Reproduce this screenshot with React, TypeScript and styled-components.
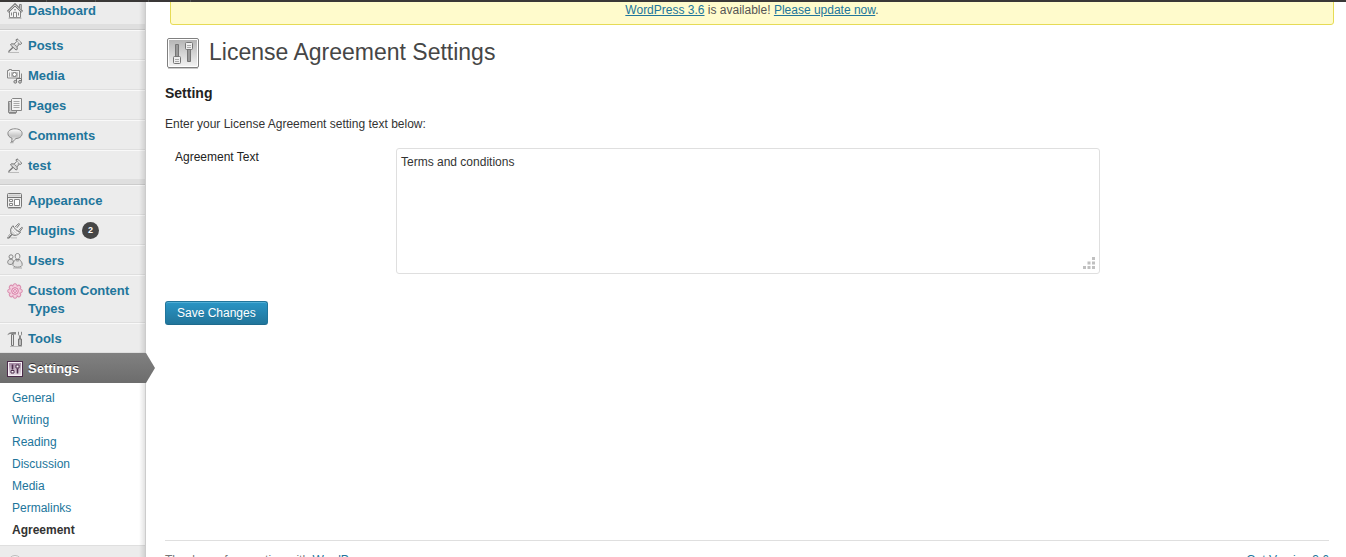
import React from "react";
import styled, { createGlobalStyle, css } from "styled-components";

const GlobalStyle = createGlobalStyle`
  *, *::before, *::after { box-sizing: border-box; }
  body {
    margin: 0;
    overflow: hidden;
    background: #fff;
    color: #333;
    font: 12px/18px "Liberation Sans", Arial, sans-serif;
  }
  h2, h3, p, ul { margin: 0; padding: 0; }
  ul { list-style: none; }
`;

const link = "#21759b";

const AdminBar = styled.header`
  position: relative;
  z-index: 2;
  display: flex;
  height: 2px;
  background: #3a3837;
`;

const AdminBarItem = styled.span<{ $width: number }>`
  width: ${(p) => p.$width}px;
  border-right: 1px solid #555;
`;

const Page = styled.div`
  display: flex;
  align-items: stretch;
  min-height: calc(100vh + 27px);
  margin-top: -7px;
`;

const Sidebar = styled.nav`
  position: relative;
  flex: 0 0 146px;
  background: #ececec;
  border-right: 1px solid #ccc;

  &::after {
    content: "";
    position: absolute;
    inset: 0 0 0 auto;
    width: 6px;
    background: linear-gradient(to right, rgba(0, 0, 0, 0), rgba(0, 0, 0, 0.11));
    pointer-events: none;
  }
`;

const MenuLink = styled.a<{ $current?: boolean }>`
  display: flex;
  align-items: flex-start;
  gap: 5px;
  padding: 6px 8px 4px 7px;
  border-top: 1px solid #f9f9f9;
  border-bottom: 1px solid #dfdfdf;
  color: ${link};
  font-size: 13px;
  font-weight: bold;
  line-height: 18px;
  text-decoration: none;

  svg {
    flex: none;
    display: block;
    margin-top: 1px;
  }

  ${(p) =>
    p.$current &&
    css`
      position: relative;
      z-index: 1;
      margin-right: -1px;
      border-color: #808080 transparent #6d6d6d;
      background: linear-gradient(#808080, #6d6d6d);
      color: #fff;
      text-shadow: 0 -1px 0 #333;

      &::after {
        content: "";
        position: absolute;
        top: -1px;
        bottom: -1px;
        left: 100%;
        width: 9px;
        background: linear-gradient(#808080, #6d6d6d);
        clip-path: polygon(0 0, 100% 50%, 0 100%);
      }
    `}
`;

const CountBadge = styled.span`
  width: 17px;
  height: 17px;
  margin-left: 2px;
  border-radius: 50%;
  background: #464646;
  color: #fff;
  font-size: 9px;
  line-height: 17px;
  text-align: center;
`;

const Separator = styled.li`
  height: 5px;
  border-bottom: 1px solid #ccc;
  background: #dfdfdf;
`;

const Submenu = styled.ul`
  padding: 4px 0;
  background: #fff;
`;

const SubmenuLink = styled.a<{ $current?: boolean }>`
  display: block;
  padding: 2px 12px;
  color: ${(p) => (p.$current ? "#333" : link)};
  font-weight: ${(p) => (p.$current ? "bold" : "normal")};
  text-decoration: none;
`;

const CollapseButton = styled.button`
  display: flex;
  align-items: center;
  gap: 5px;
  width: 100%;
  padding: 8px 7px;
  border: 0;
  border-top: 1px solid #dfdfdf;
  background: none;
  color: #777;
  font: inherit;
`;

const Main = styled.main`
  display: flex;
  flex: 1;
  flex-direction: column;
  min-width: 0;
  padding: 0 17px 0 19px;
`;

const Notice = styled.p`
  margin: 0 -5px 0 5px;
  padding: 5px 0;
  border: 1px solid #e6db55;
  border-radius: 3px;
  background: #fffbcc;
  color: #555;
  text-align: center;

  a { color: ${link}; }
`;

const PageHeading = styled.div`
  display: flex;
  align-items: center;
  gap: 10px;
  height: 30px;
  margin-top: 13px;
  padding-left: 2px;

  svg { display: block; }
`;

const PageTitle = styled.h2`
  color: #464646;
  font-size: 23px;
  font-weight: normal;
  line-height: 28px;
  padding-bottom: 2px;
`;

const SectionTitle = styled.h3`
  margin-top: 15px;
  color: #222;
  font-size: 14px;
  line-height: 20px;
`;

const Intro = styled.p`
  margin-top: 12px;
`;

const Field = styled.div`
  display: grid;
  grid-template-columns: 221px minmax(0, 704px);
  margin-top: 15px;
  padding-left: 10px;
`;

const FieldLabel = styled.label`
  color: #222;
`;

const TextBox = styled.div`
  position: relative;

  svg {
    position: absolute;
    right: 5px;
    bottom: 5px;
    pointer-events: none;
  }
`;

const TextArea = styled.textarea`
  display: block;
  width: 100%;
  height: 126px;
  padding: 4px;
  border: 1px solid #dfdfdf;
  border-radius: 3px;
  outline: none;
  resize: none;
  background: #fff;
  color: #333;
  font: inherit;
`;

const SaveButton = styled.button`
  align-self: flex-start;
  height: 24px;
  margin-top: 27px;
  padding: 0 11px;
  border: 1px solid #21759b;
  border-bottom-color: #1e6a8d;
  border-radius: 3px;
  background: linear-gradient(#2a95c5, #21759b);
  box-shadow: inset 0 1px 0 rgba(120, 200, 230, 0.5);
  color: #fff;
  font: inherit;
  line-height: 22px;
  text-shadow: 0 1px 0 rgba(0, 0, 0, 0.1);
`;

const Footer = styled.footer`
  display: flex;
  justify-content: space-between;
  margin-top: auto;
  padding: 10px 0;
  border-top: 1px solid #dfdfdf;
  color: #777;

  a { color: ${link}; text-decoration: none; }
`;

function Icon({ children }: { children: React.ReactNode }) {
  return (
    <svg width="16" height="16" viewBox="0 0 16 16" fill="none" stroke="#858585" aria-hidden="true">
      {children}
    </svg>
  );
}

const DashboardIcon = () => (
  <Icon>
    <path d="M2.5 8v6.5h11V8L8 2.8z" fill="#f5f5f5" />
    <path d="M.8 8.7 8 1.7l7.2 7" stroke="#777" strokeWidth="2.6" />
    <path d="M1.2 8.5 8 1.9l6.8 6.6" stroke="#ddd" strokeWidth="1" />
    <path d="M12.5 5V1.5h1.8v5" fill="#ccc" />
    <path d="M6.5 14.5V9.3h3v5.2M4.5 9.5v3M11.5 9.5v3M7 6.8h2" />
    <path d="M1.5 15.2h13" stroke="#aaa" />
  </Icon>
);

const PinIcon = () => (
  <Icon>
    <path d="M1 14.5h11" stroke="#bbb" />
    <path d="m1.5 13.8 5-5" stroke="#777" strokeWidth="1.300" />
    <path d="M10 .8 14.900 5.300 13.400 6.500 12.300 6 10 8.900 10.300 11.300 9 12 3.500 7 4.300 5.800 7.200 6 9.800 3.400 8.900 2z" fill="#d8d8d8" stroke="#777" />
    <path d="m10 3.800 2.200 2M7.300 6.400l2.300 2.200" stroke="#888" />
    <path d="m11.200 2.700 2 1.900M8.500 6.400l2.200-2.300" stroke="#fff" />
  </Icon>
);

const MediaIcon = () => (
  <Icon>
    <path d="M.5 2.500h1.500v-1h2.500v1h8v7.500H.5z" fill="#f2f2f2" stroke="#888" />
    <path d="M2.500 4.500v4" stroke="#aaa" />
    <path d="M4.500 4.500h6v4h-6z" stroke="#bbb" />
    <circle cx="7.500" cy="6.500" r="2" fill="#fff" stroke="#777" />
    <path d="M9.500 14v-3.500h5V13" fill="#eee" stroke="#777" />
    <path d="M14.500 11V5.500" stroke="#888" />
    <circle cx="8.300" cy="13.800" r="1.400" fill="#ccc" stroke="#777" />
    <circle cx="13" cy="13.800" r="1.400" fill="#ccc" stroke="#777" />
  </Icon>
);

const PagesIcon = () => (
  <Icon>
    <path d="M4 3.500H1.500v11h8V13" fill="#ccc" />
    <path d="M5.500.5h9v12H4.500v-11z" fill="#f4f4f4" />
    <path d="M6.500 3.500h6M6.500 5.500h6M6.500 7.500h6M6.500 9.500h6" stroke="#aaa" />
    <path d="M2.500 5v8" stroke="#aaa" />
    <path d="M2 15.300h7" stroke="#888" />
  </Icon>
);

const CommentsIcon = () => (
  <Icon>
    <defs>
      <linearGradient id="bubble" x1="0" y1="0" x2="0" y2="1">
        <stop offset="0" stopColor="#fff" />
        <stop offset=".55" stopColor="#c4c4c4" />
        <stop offset="1" stopColor="#fff" />
      </linearGradient>
    </defs>
    <path d="M8 .8c4.100 0 7.100 1.800 7.100 4.700s-2.700 5-6.400 5c-1 1.700-2 2.800-4.200 3.600.5-1.700.6-2.400.4-4C2.600 9.400.9 7.900.9 5.500c0-2.900 3-4.700 7.100-4.700z" fill="url(#bubble)" />
    <path d="M3 14.700h3.500" stroke="#aaa" />
  </Icon>
);

const AppearanceIcon = () => (
  <Icon>
    <rect x=".5" y=".5" width="14" height="14" rx="1" fill="#eee" stroke="#777" />
    <path d="M1.500 2.500h12" stroke="#ccc" strokeWidth="2" />
    <path d="M1 4.500h13" stroke="#777" />
    <path d="M2.500 6.500h3v2h-3zM2.500 10.500h3v2h-3zM7.500 6.500h5v6h-5z" fill="#fff" />
    <path d="M1 15.500h13" stroke="#bbb" />
  </Icon>
);

const PluginsIcon = () => (
  <Icon>
    <path d="M.5 14.200c1 .6 1.700-.2 2.300-1.200l1.800-2" stroke="#777" strokeWidth="2.500" />
    <path d="M1 13.900c.7.1 1-.6 1.500-1.400l2.100-2" stroke="#eee" />
    <path d="m8.200 4 3.100-3.200c.7-.5 1.500.1 1 .9L9.800 4.900M11.800 7.500l2.700-3c.6-.7 1.200.1.8.8l-2.700 3.600" fill="#eee" stroke="#777" />
    <path d="M6 2.700c1.300 2.800 3.800 5.300 7.500 6.600-2.200 3.100-6.400 4-8.500 2-2.100-2-2-5.800 1-8.600z" fill="#d5d5d5" stroke="#777" />
    <path d="M6 4.700c1 2.500 3 4.400 5.400 5.400M5 6.300c.8 2 2.200 3.700 4.300 4.800" stroke="#fff" />
    <path d="M4 14.900h6" stroke="#bbb" />
  </Icon>
);

const UsersIcon = () => (
  <Icon>
    <circle cx="4" cy="3.800" r="2" fill="#eee" />
    <path d="M4 6.200c-2.200 0-3.300 1.300-3.300 3.400 0 1.400 1.500 1.900 3.800 1.900l2-2.500C6.400 7.300 5.600 6.200 4 6.200z" fill="#ddd" />
    <path d="M8.200 3.200c0-2 1.100-2.700 2.300-2.700s2.400.8 2.400 2.700c0 1.700-1 3-2.400 3s-2.300-1.300-2.300-3z" fill="#eee" />
    <path d="M8.500 6.500h4.200c.7 1.200 2.500 2.600 2.500 4.800 0 2-1.500 2.900-4.700 2.900s-4.600-.9-4.600-2.900c0-2.200 1.900-3.600 2.600-4.800z" fill="#e2e2e2" />
    <path d="M8.800 7.200c.8 1 2.700 1 3.500 0" />
    <path d="M6 15h9" stroke="#aaa" />
  </Icon>
);

const FlowerIcon = () => (
  <Icon>
    {[0, 45, 90, 135, 180, 225, 270, 315].map((angle) => (
      <circle key={angle} cx="8" cy="2.700" r="2" fill="#f3cddd" stroke="#d98bad" transform={`rotate(${angle} 8 8)`} />
    ))}
    <circle cx="8" cy="8" r="5" fill="#f3cddd" stroke="none" />
    <circle cx="8" cy="8" r="3.300" fill="#f7dce8" stroke="#d879a3" />
    <circle cx="8" cy="8" r="1.400" fill="#fff" stroke="#d879a3" />
  </Icon>
);

const ToolsIcon = () => (
  <Icon>
    <path d="M.3 4.300C1.300 1.600 2.800 1 6 1h3v2.600H6.800v-.5H4.200c-1.500 0-2.400.3-3.900 1.200z" fill="#888" stroke="none" />
    <path d="M4.500 3.500h2v11h-2z" fill="#e4e4e4" stroke="#777" />
    <path d="M11.500.8v3l1 1V8h1V4.800l1-1v-3" stroke="#888" />
    <path d="M11.500 8h3v6.500h-3z" fill="#bbb" stroke="#777" />
    <path d="M3 15.500h12" stroke="#bbb" />
  </Icon>
);

const SettingsIcon = () => (
  <Icon>
    <defs>
      <linearGradient id="settings-face" x1="0" y1="0" x2="0" y2="1">
        <stop offset="0" stopColor="#a58aa4" />
        <stop offset="1" stopColor="#e6dbe5" />
      </linearGradient>
    </defs>
    <rect x=".5" y=".5" width="15" height="15" fill="#f6eff5" stroke="#4b2b4a" />
    <rect x="2" y="2" width="12" height="12" fill="url(#settings-face)" stroke="none" />
    <path d="M5.500 3.500v5M10.500 7.500v5" stroke="#4b2b4a" strokeWidth="1.600" />
    <path d="M4 9.500h3V12H4zM9 4h3v3H9z" fill="#fff" stroke="#4b2b4a" />
  </Icon>
);

const CollapseIcon = () => (
  <Icon>
    <circle cx="8" cy="8" r="6.500" fill="#f5f5f5" stroke="#bbb" />
    <path d="M9.500 5v6L6 8z" fill="#888" stroke="none" />
  </Icon>
);

function SlidersIcon() {
  return (
    <svg width="32" height="31" viewBox="0 0 32 31" fill="none" stroke="#757575" aria-hidden="true">
      <defs>
        <linearGradient id="panel" x1="0" y1="0" x2="0" y2="1">
          <stop offset="0" stopColor="#b5b5b5" />
          <stop offset="1" stopColor="#f2f2f2" />
        </linearGradient>
      </defs>
      <rect x=".5" y=".5" width="31" height="29" rx="1.500" fill="#fff" stroke="#808080" />
      <rect x="2" y="2" width="28" height="26" fill="url(#panel)" stroke="none" />
      <path d="M1 30.500h30" stroke="#ccc" />
      <path d="M8.500 6.500h3v12h-3zM20.500 11.500h3v12h-3z" fill="#999" />
      <rect x="6.500" y="18.500" width="7" height="7" rx="1" fill="#eee" />
      <rect x="18.500" y="4.500" width="7" height="7" rx="1" fill="#eee" />
      <path d="M8 21.500h4M8 23.500h4M20 7.500h4M20 9.500h4" stroke="#aaa" />
    </svg>
  );
}

function ResizeGrip() {
  return (
    <svg width="12" height="12" viewBox="0 0 12 12" fill="#c0c0c0" aria-hidden="true">
      <path d="M9 0h3v3H9zM4.500 4.500h3v3h-3zM9 4.500h3v3H9zM0 9h3v3H0zM4.500 9h3v3h-3zM9 9h3v3H9z" />
    </svg>
  );
}

type MenuEntry = { label: string; icon: React.ComponentType; count?: number; current?: boolean };

const menuGroups: MenuEntry[][] = [
  [{ label: "Dashboard", icon: DashboardIcon }],
  [
    { label: "Posts", icon: PinIcon },
    { label: "Media", icon: MediaIcon },
    { label: "Pages", icon: PagesIcon },
    { label: "Comments", icon: CommentsIcon },
    { label: "test", icon: PinIcon },
  ],
  [
    { label: "Appearance", icon: AppearanceIcon },
    { label: "Plugins", icon: PluginsIcon, count: 2 },
    { label: "Users", icon: UsersIcon },
    { label: "Custom Content Types", icon: FlowerIcon },
    { label: "Tools", icon: ToolsIcon },
    { label: "Settings", icon: SettingsIcon, current: true },
  ],
];

const settingsPages = ["General", "Writing", "Reading", "Discussion", "Media", "Permalinks", "Agreement"];

export default function App() {
  return (
    <>
      <GlobalStyle />
      <AdminBar>
        <AdminBarItem $width={47} />
        <AdminBarItem $width={49} />
        <AdminBarItem $width={53} />
        <AdminBarItem $width={42} />
      </AdminBar>
      <Page>
        <Sidebar aria-label="Main menu">
          <ul>
            {menuGroups.map((group, index) => (
              <React.Fragment key={index}>
                {index > 0 && <Separator role="separator" />}
                {group.map(({ label, icon: EntryIcon, count, current }) => (
                  <li key={label}>
                    <MenuLink href="#" $current={current}>
                      <EntryIcon />
                      <span>{label}</span>
                      {count && <CountBadge>{count}</CountBadge>}
                    </MenuLink>
                    {current && (
                      <Submenu>
                        {settingsPages.map((name) => (
                          <li key={name}>
                            <SubmenuLink href="#" $current={name === "Agreement"}>
                              {name}
                            </SubmenuLink>
                          </li>
                        ))}
                      </Submenu>
                    )}
                  </li>
                ))}
              </React.Fragment>
            ))}
          </ul>
          <CollapseButton type="button" aria-label="Collapse menu">
            <CollapseIcon />
          </CollapseButton>
        </Sidebar>
        <Main>
          <Notice>
            <a href="#">WordPress 3.6</a> is available! <a href="#">Please update now</a>.
          </Notice>
          <PageHeading>
            <SlidersIcon />
            <PageTitle>License Agreement Settings</PageTitle>
          </PageHeading>
          <SectionTitle>Setting</SectionTitle>
          <Intro>Enter your License Agreement setting text below:</Intro>
          <Field>
            <FieldLabel htmlFor="agreement">Agreement Text</FieldLabel>
            <TextBox>
              <TextArea id="agreement" defaultValue="Terms and conditions" />
              <ResizeGrip />
            </TextBox>
          </Field>
          <SaveButton type="button">Save Changes</SaveButton>
          <Footer>
            <span>
              Thank you for creating with <a href="#">WordPress</a>.
            </span>
            <a href="#">Get Version 3.6</a>
          </Footer>
        </Main>
      </Page>
    </>
  );
}
